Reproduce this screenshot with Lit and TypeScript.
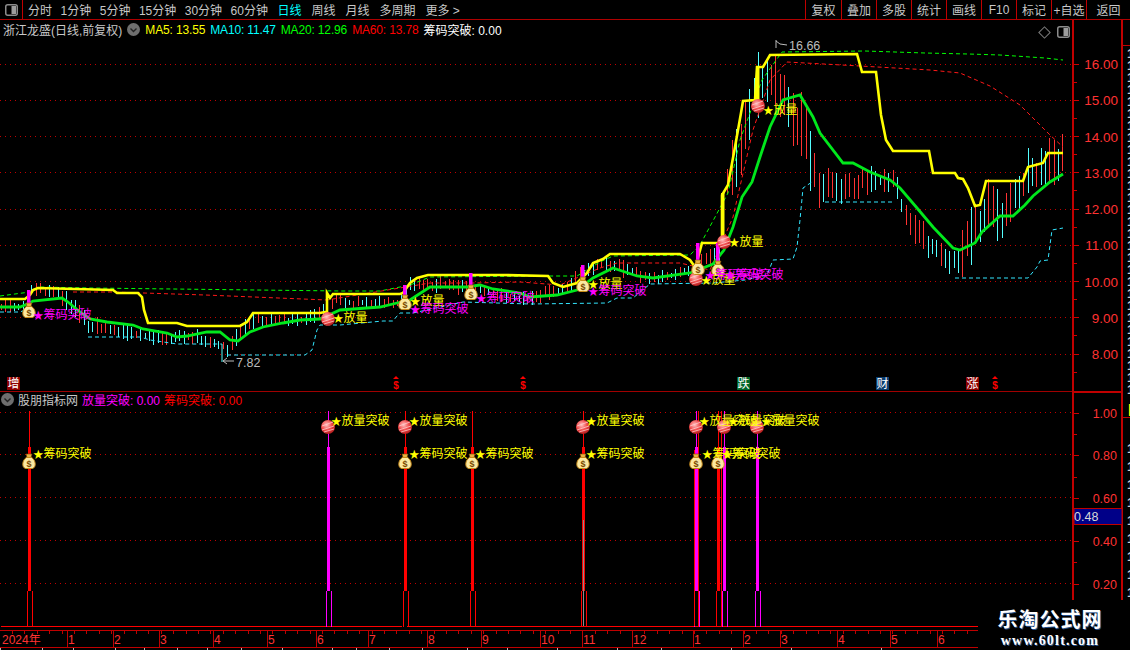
import { LitElement, html, css, svg } from 'lit';
import { customElement } from 'lit/decorators.js';

type Pt = [number, number];

const tabs = ['分时', '1分钟', '5分钟', '15分钟', '30分钟', '60分钟', '日线', '周线', '月线', '多周期', '更多 >'];
const buttons = ['复权', '叠加', '多股', '统计', '画线', 'F10', '标记', '+自选', '返回'];

// chart lines, page pixel coordinates read off the reference
const yellow: Pt[] = [[0,299],[25,299],[30,295],[33,290],[38,288],[113,290],[117,293],[138,293],[142,297],[144,310],[148,323],[177,323],[187,326],[240,326],[247,322],[253,313],[320,313],[325,312],[327,312],[327,293],[330,298],[333,294],[400,294],[403,293],[410,283],[417,278],[428,275],[502,275],[548,276],[553,283],[563,287],[577,283],[587,273],[593,263],[603,259],[610,254],[680,254],[690,260],[695,267],[698,258],[702,243],[722,243],[722,195],[728,185],[735,147],[741,113],[743,101],[755,100],[757,67],[763,67],[770,55],[857,54],[862,72],[876,72],[881,115],[886,140],[893,151],[929,151],[933,173],[955,173],[958,178],[963,179],[968,188],[975,206],[980,205],[986,181],[1023,181],[1028,167],[1043,163],[1048,153],[1063,153]];
const green: Pt[] = [[0,307],[20,307],[25,305],[33,301],[62,298],[68,302],[80,312],[90,319],[107,322],[133,325],[143,329],[167,333],[177,337],[187,336],[207,332],[220,332],[230,340],[238,341],[250,332],[263,327],[283,323],[300,320],[320,319],[340,310],[380,307],[397,303],[410,300],[430,287],[467,287],[480,285],[493,289],[520,293],[530,297],[557,295],[577,290],[593,278],[613,268],[637,276],[653,278],[690,273],[713,264],[724,250],[733,227],[742,197],[752,182],[760,157],[770,127],[783,100],[800,95],[813,117],[820,133],[843,163],[853,163],[870,172],[890,180],[900,188],[917,208],[933,227],[953,248],[960,250],[975,243],[982,232],[1000,216],[1013,216],[1025,205],[1033,196],[1050,182],[1063,174]];
const cyanSteps: Pt[][] = [
  [[0,312],[20,312],[30,308]],
  [[88,337],[140,337],[150,340],[177,344],[222,344]],
  [[227,355],[305,355],[312,350],[317,330],[320,325],[340,325],[383,321],[393,321],[397,316],[400,313],[413,313],[463,302],[530,304],[607,303],[617,298],[633,298],[650,284],[713,283],[745,280],[767,275],[773,260],[793,259],[797,247],[800,220],[803,188],[812,182]],
  [[825,202],[893,202]],
  [[955,278],[1028,278],[1037,267],[1040,261],[1048,260],[1052,230],[1063,228]],
];
const greenDash: Pt[] = [[0,296],[30,292],[38,287],[90,288],[340,291],[380,291],[410,285],[430,277],[548,276],[577,276],[600,262],[613,256],[690,255],[700,245],[728,193],[740,140],[750,113],[762,80],[782,52],[865,51],[925,53],[968,54],[1000,55],[1045,58],[1063,60]];
const redDash: Pt[] = [[73,292],[113,292],[205,295],[327,300],[430,283],[473,283],[520,282],[560,285],[600,268],[617,263],[680,263],[710,270],[733,217],[753,130],[770,80],[787,62],[860,66],[930,70],[960,73],[990,86],[1020,105],[1050,135],[1063,147]];

// candle cloud: x, middle y, half range
const cloud: [number, number, number][] = [[0,306,6],[25,306,6],[30,288,8],[60,296,8],[75,308,10],[88,325,10],[110,328,8],[140,335,8],[170,340,7],[190,335,8],[222,345,8],[228,350,9],[236,340,10],[250,320,8],[300,320,6],[325,312,8],[335,298,8],[350,303,6],[400,302,6],[410,285,8],[440,285,8],[480,290,8],[525,300,7],[560,290,8],[580,275,9],[600,262,10],[630,270,9],[650,280,7],[690,270,6],[700,260,10],[720,255,12],[725,190,25],[740,140,35],[757,85,40],[770,75,35],[785,95,40],[800,130,40],[812,160,35],[820,190,20],[870,180,14],[893,180,14],[905,215,16],[930,245,16],[955,265,12],[965,245,30],[985,215,35],[1005,215,28],[1025,180,28],[1045,165,24],[1063,155,22]];

const priceTicks = [16, 15, 14, 13, 12, 11, 10, 9, 8];
const indicatorTicks = [1, 0.8, 0.6, 0.4, 0.2];
const priceY = (p: number) => 64 + (16 - p) * 36.25;
const indicatorY = (v: number) => 412 + (1 - v) * 214;

const months: [string, number][] = [['2024年',1],['1',67],['2',113],['3',159],['4',213],['5',267],['6',316],['7',368],['8',427],['9',481],['10',540],['11',582],['12',632],['1',693],['2',743],['3',780],['4',837],['5',890],['6',937]];

const spikes = [
  { x: 29, color: '#ff0000', ball: false, bag: true },
  { x: 328, color: '#ff00ff', ball: true, bag: false },
  { x: 405, color: '#ff0000', ball: true, bag: true },
  { x: 472, color: '#ff0000', ball: false, bag: true },
  { x: 583, color: '#ff0000', ball: true, bag: true },
  { x: 696, color: '#ff00ff', ball: true, bag: true },
  { x: 718, color: '#ff0000', ball: false, bag: true },
  { x: 724, color: '#ff00ff', ball: true, bag: false },
  { x: 757, color: '#ff00ff', ball: true, bag: false },
];

const line = (p: Pt[]) => p.map((q) => q.join(',')).join(' ');

function candles() {
  let seed = 41;
  const rnd = () => {
    seed = (seed * 16807) % 2147483647;
    return seed / 2147483647;
  };
  const out = [];
  for (let x = 1; x < 1063; x += 4.35) {
    const i = cloud.findIndex((c) => c[0] > x);
    const a = cloud[Math.max(i - 1, 0)];
    const b = cloud[i < 0 ? cloud.length - 1 : i];
    const t = b[0] === a[0] ? 0 : (x - a[0]) / (b[0] - a[0]);
    const mid = a[1] + (b[1] - a[1]) * t;
    const amp = a[2] + (b[2] - a[2]) * t;
    const top = mid - amp * (0.3 + rnd() * 0.8);
    const bottom = mid + amp * (0.3 + rnd() * 0.8);
    const color = rnd() > 0.5 ? '#ff3232' : '#54ffff';
    const px = Math.round(x);
    out.push(svg`<line x1=${px} x2=${px} y1=${top} y2=${bottom} stroke=${color} />`);
  }
  return out;
}

function ball(x: number, y: number) {
  return svg`<g transform="translate(${x} ${y})">
    <circle r="7" fill="url(#ballFill)" />
    <path d="M-6 -1 L5 -5 M-6 3 L6 -1 M-4 5 L6 2" stroke="#ffd0d0" stroke-width="1" fill="none" opacity="0.75" />
  </g>`;
}

function bag(x: number, y: number) {
  return svg`<g transform="translate(${x} ${y})">
    <path d="M-3 -8 L3 -8 L2 -4.5 L-2 -4.5 Z" fill="#e8b040" stroke="#7a4a00" stroke-width="0.6" />
    <path d="M-2.5 -4.5 L2.5 -4.5 C7 -2 7.5 5.5 3.5 6.5 L-3.5 6.5 C-7.5 5.5 -7 -2 -2.5 -4.5 Z" fill="#fbe8a0" stroke="#c88a18" stroke-width="1" />
    <text class="bag-sign" y="4.5">$</text>
  </g>`;
}

function marker(x: number, y: number, text: string, color: string) {
  return svg`<text class="signal" x=${x} y=${y} fill=${color}><tspan class="star">★</tspan>${text}</text>`;
}

function flagMark(x: number) {
  return svg`<path d="M${x - 3} 379 L${x} 376 L${x + 3} 379 Z" fill="#ff0000" /><text class="dollar" x=${x} y="388.5">$</text>`;
}

const dollarBars: [number, number, number][] = [[29, 290, 306], [405, 285, 296], [471, 273, 286], [583, 265, 278], [698, 243, 262], [718, 243, 263]];

function mainChart() {
  return html`<svg class="plot" width="1072" height="371" viewBox="0 20 1072 371">
    <defs>
      <radialGradient id="ballFill" cx="0.4" cy="0.35" r="0.7">
        <stop offset="0" stop-color="#ffc0c0" />
        <stop offset="0.55" stop-color="#f04848" />
        <stop offset="1" stop-color="#a81818" />
      </radialGradient>
    </defs>
    ${priceTicks.map((p) => svg`<line class="grid" x1="0" x2="1072" y1=${priceY(p)} y2=${priceY(p)} />`)}
    <g class="crisp">${candles()}</g>
    <polyline class="dash" stroke="#00ff00" stroke-width="1" points=${line(greenDash)} />
    <polyline class="dash" stroke="#ff1818" stroke-width="1" points=${line(redDash)} />
    ${cyanSteps.map((s) => svg`<polyline class="dash" stroke="#33e6ff" stroke-width="1" points=${line(s)} />`)}
    <polyline class="curve" stroke="#ffff00" stroke-width="2.6" points=${line(yellow)} />
    <polyline class="curve" stroke="#00e81c" stroke-width="2.8" points=${line(green)} />
    <rect x="721" y="193" width="3.5" height="50" fill="#ffff00" />
    <rect x="756" y="67" width="3.5" height="34" fill="#ffff00" />

    <path class="note" d="M776 40 L776 48 M776 41 L780 44 L787 45" />
    <text class="note-text" x="789" y="50">16.66</text>
    <line x1="222" x2="222" y1="344" y2="362" stroke="#54ffff" />
    <path class="note" d="M223 361 L234 361 M223 361 L227 358 M223 361 L227 364" />
    <text class="note-text" x="236" y="367">7.82</text>

    ${dollarBars.map((b) => svg`<rect x=${b[0] - 2} y=${b[1]} width="3.5" height=${b[2] - b[1]} fill="#ff00ff" />`)}
    ${ball(328, 319)}${ball(696, 279)}${ball(724, 242)}${ball(758, 106)}
    ${bag(29, 311)}${bag(405, 303)}${bag(471, 293)}${bag(583, 285)}${bag(698, 268)}${bag(718, 269)}

    ${marker(333, 322, '放量', '#ffff00')}
    ${marker(410, 305, '放量', '#ffff00')}
    ${marker(588, 288, '放量', '#ffff00')}
    ${marker(701, 284, '放量', '#ffff00')}
    ${marker(729, 246, '放量', '#ffff00')}
    ${marker(763, 114, '放量', '#ffff00')}
    ${marker(33, 319, '筹码突破', '#ff00ff')}
    ${marker(410, 313, '筹码突破', '#ff00ff')}
    ${marker(476, 302, '筹码突破', '#ff00ff')}
    ${marker(588, 295, '筹码突破', '#ff00ff')}
    ${marker(705, 279, '筹码突破', '#ff00ff')}
    ${marker(725, 279, '筹码突破', '#ff00ff')}

    <rect x="7" y="377" width="13" height="13" fill="#8c0000" /><text class="tag" x="13.5" y="388">增</text>
    <rect x="737" y="377" width="13" height="13" fill="#006428" /><text class="tag" x="743.5" y="388">跌</text>
    <rect x="876" y="377" width="13" height="13" fill="#0a3c6e" /><text class="tag" x="882.5" y="388">财</text>
    <rect x="966" y="377" width="13" height="13" fill="#8c0000" /><text class="tag" x="972.5" y="388">涨</text>
    ${flagMark(396)}${flagMark(523)}${flagMark(995)}
  </svg>`;
}

function subChart() {
  return html`<svg class="plot" width="1072" height="238" viewBox="0 392 1072 238">
    ${indicatorTicks.map((v) => svg`<line class="grid" x1="0" x2="1072" y1=${indicatorY(v)} y2=${indicatorY(v)} />`)}
    <rect x="1" y="626" width="401" height="1" fill="#ff0000" />
    <rect x="407" y="626" width="665" height="1" fill="#ff0000" />
    ${spikes.map((s) => svg`<g fill=${s.color}>
      <rect x=${s.x} y="411" width="1" height="36" />
      <rect x=${s.x - 1} y="447" width="3" height="144" />
      <rect x=${s.x - 2} y="591" width="1" height="36" />
      <rect x=${s.x + 3} y="591" width="1" height="36" />
    </g>`)}
    <path class="crisp" d="M698.5 411 V626 M721.5 411 V626 M694.5 450 V626" stroke="#ff0000" fill="none" />
    <rect x="583" y="520" width="1" height="106" fill="#8c8c8c" />
    ${spikes.filter((s) => s.ball).map((s) => ball(s.x, 427))}
    ${spikes.filter((s) => s.bag).map((s) => bag(s.x, 462))}
    ${marker(33, 458, '筹码突破', '#ffff00')}
    ${marker(331, 425, '放量突破', '#ffff00')}
    ${marker(409, 425, '放量突破', '#ffff00')}
    ${marker(409, 458, '筹码突破', '#ffff00')}
    ${marker(475, 458, '筹码突破', '#ffff00')}
    ${marker(586, 425, '放量突破', '#ffff00')}
    ${marker(586, 458, '筹码突破', '#ffff00')}
    ${marker(699, 425, '放量突破', '#ffff00')}
    ${marker(702, 458, '筹码突破', '#ffff00')}
    ${marker(722, 458, '筹码突破', '#ffff00')}
    ${marker(728, 425, '放量突破', '#ffff00')}
    ${marker(761, 425, '放量突破', '#ffff00')}
  </svg>`;
}

function dateAxis() {
  const ticks = [];
  for (let x = 12; x < 978; x += 12.4) ticks.push(svg`<line x1=${Math.round(x)} x2=${Math.round(x)} y1="0" y2="3" />`);
  return html`<svg class="dates" width="1072" height="16" viewBox="0 0 1072 16">
    <g class="crisp" stroke="#c00000">${ticks}</g>
    ${months.map((m, i) => svg`
      ${i > 0 ? svg`<line class="crisp" x1=${m[1]} x2=${m[1]} y1="0" y2="16" stroke="#c00000" />` : ''}
      <text class="date" x=${m[1] + 1} y="13">${m[0]}</text>`)}
  </svg>`;
}

function priceAxis() {
  const minor = priceTicks.map((p) => p - 0.5);
  return html`<svg width="49" height="371" viewBox="1074 20 49 371">
    <g class="crisp" stroke="#d00000">
      ${priceTicks.map((p) => svg`<line x1="1074" x2="1079" y1=${priceY(p)} y2=${priceY(p)} />`)}
      ${minor.map((p) => svg`<line x1="1074" x2="1077" y1=${priceY(p)} y2=${priceY(p)} />`)}
    </g>
    ${priceTicks.map((p) => svg`<text class="price" x="1118" y=${priceY(p) + 5}>${p.toFixed(2)}</text>`)}
  </svg>`;
}

function indicatorAxis() {
  const minor = [0.9, 0.7, 0.5, 0.3];
  return html`<svg width="49" height="208" viewBox="1074 392 49 208">
    <g class="crisp" stroke="#d00000">
      ${indicatorTicks.map((v) => svg`<line x1="1074" x2="1079" y1=${indicatorY(v)} y2=${indicatorY(v)} />`)}
      ${minor.map((v) => svg`<line x1="1074" x2="1077" y1=${indicatorY(v)} y2=${indicatorY(v)} />`)}
    </g>
    ${indicatorTicks.map((v) => svg`<text class="level" x="1117" y=${indicatorY(v) + 4.5}>${v.toFixed(2)}</text>`)}
    <rect x="1074" y="507.5" width="48" height="16" fill="#000088" stroke="#c00000" />
    <text class="cursor" x="1074" y="520">0.48</text>
  </svg>`;
}

const chevron = html`<svg class="chevron" width="13" height="13" viewBox="0 0 13 13">
  <circle cx="6.5" cy="6.5" r="6.5" fill="#6e6e6e" />
  <path d="M3.5 5.5 L6.5 8.5 L9.5 5.5" fill="none" stroke="#222" stroke-width="1.4" />
</svg>`;

const panelIcon = (cls: string) => html`<svg class=${cls} width="13" height="12" viewBox="0 0 13 12">
  <rect x="0.75" y="0.75" width="11.5" height="10.5" rx="2" fill="none" stroke="#8c8c8c" stroke-width="1.5" />
  <rect x="6.5" y="2" width="4.5" height="8" fill="#9c9c9c" />
</svg>`;

const upperRows = Array.from({ length: 29 }, (_, i) => (13.8 - i * 0.03).toFixed(2));
const lowerRows = ['12.41', '12.38', '12.35', '12.33', '12.30', '12.28', '12.25', '12.22', '12.20', '12.18'];
const statusCells = [42, 31, 42, 29, 33, 30, 34, 41, 50, 24, 33, 33, 45, 40, 50, 60, 44, 70, 60, 90, 120];

@customElement('app-root')
export class AppRoot extends LitElement {
  static styles = css`
    :host {
      display: block;
      position: relative;
      width: 1130px;
      height: 650px;
      overflow: hidden;
      background: #000;
      color: #c8c8c8;
      font: 12px 'Liberation Sans', 'Noto Sans CJK SC', sans-serif;
    }
    svg { display: block; }
    .toolbar {
      display: flex;
      align-items: center;
      height: 20px;
      box-sizing: border-box;
      border-bottom: 1px solid #b00000;
    }
    .home {
      display: flex;
      align-items: center;
      justify-content: center;
      flex: none;
      width: 23px;
      height: 100%;
      border-right: 1px solid #c00000;
      box-sizing: border-box;
    }
    .tabs { display: flex; gap: 8.5px; padding-left: 5px; white-space: nowrap; }
    .tab-active { color: #00ffff; margin-left: 1px; }
    .tab-active ~ span { margin-left: 1.5px; }
    .buttons { display: flex; height: 100%; margin-left: auto; }
    .button {
      display: flex;
      align-items: center;
      justify-content: center;
      width: 34px;
      border-left: 1px solid #c00000;
      white-space: nowrap;
    }
    .button:first-child { width: 35px; }
    .button:last-child { width: 43px; }
    .workspace { display: flex; height: 630px; }
    .charts { flex: none; width: 1072px; }
    .pane { position: relative; }
    .pane-main { height: 371px; border-bottom: 1px solid #a00000; }
    .pane-sub { height: 238px; }
    .legend {
      position: absolute;
      top: 1px;
      left: 3px;
      display: flex;
      align-items: center;
      gap: 5px;
      white-space: nowrap;
    }
    .legend-sub { left: 1px; top: -1px; gap: 4px; }
    .chevron { flex: none; }
    .plot-tools {
      position: absolute;
      top: 6px;
      right: 2px;
      display: flex;
      align-items: center;
      gap: 5px;
    }
    .diamond { width: 7px; height: 7px; border: 1px solid #7c7c7c; transform: rotate(45deg); margin-right: 3px; }
    .yellow, .cyan, .green, .ma-red { letter-spacing: -0.15px; }
    .yellow { color: #ffff00; }
    .cyan { color: #00ffff; }
    .green { color: #00ff00; }
    .red, .ma-red { color: #ff0000; }
    .white { color: #ffffff; }
    .magenta { color: #ff00ff; }
    .dates { border-top: 1px solid #c00000; border-bottom: 1px solid #c00000; }
    .status { display: flex; height: 4px; overflow: hidden; }
    .status span { flex: none; border-left: 1px solid #b8b8b8; box-sizing: border-box; }
    .axes {
      flex: none;
      width: 51px;
      height: 580px;
      border-left: 2px solid #c00000;
      border-right: 2px solid #c00000;
      box-sizing: border-box;
    }
    .axis-main { height: 371px; border-bottom: 2px solid #c00000; }
    .side {
      flex: 1;
      height: 630px;
      overflow: hidden;
      display: flex;
      flex-direction: column;
      white-space: nowrap;
      color: #d0d0d0;
      font-size: 13px;
      font-weight: 700;
    }
    .side-head { height: 25px; flex: none; border-bottom: 1px solid #c00000; }
    .side-upper {
      height: 354px;
      flex: none;
      padding: 2px 0 0 4px;
      overflow: hidden;
      line-height: 12px;
    }
    .side-mark { flex: none; height: 15px; padding-left: 4px; line-height: 15px; color: #ffff00; }
    .side-lower {
      flex: none;
      border-top: 1px solid #c00000;
      padding: 22px 0 0 4px;
      line-height: 18px;
    }
    .watermark {
      position: absolute;
      left: 978px;
      top: 600px;
      width: 152px;
      height: 50px;
      background: #000;
      display: flex;
      flex-direction: column;
      align-items: center;
      padding: 7px 8px 0 0;
      box-sizing: border-box;
      color: #fff;
      text-shadow: 1px 1px 0 #24508c;
    }
    .wm-title { font: 700 20px/24px 'Noto Sans CJK SC', sans-serif; letter-spacing: 1px; }
    .wm-url { font: 700 14px/16px 'Liberation Serif', serif; letter-spacing: 1.2px; margin-top: 2px; }

    .crisp line, line.crisp, path.crisp, .crisp path { shape-rendering: crispEdges; }
    .grid { stroke: #c00000; stroke-width: 1; stroke-dasharray: 1 4; shape-rendering: crispEdges; }
    .curve { fill: none; stroke-linejoin: miter; }
    .dash { fill: none; stroke-dasharray: 4 3; }
    .note { fill: none; stroke: #bcbcbc; stroke-width: 1; }
    .note-text { fill: #bcbcbc; font-size: 12.5px; }
    .signal { font-size: 12px; }
    .star { font-size: 10.5px; }
    .tag { fill: #fff; font-size: 12px; text-anchor: middle; }
    .dollar { fill: #ff0000; font-size: 10px; font-weight: 700; text-anchor: middle; }
    .bag-sign { fill: #7a4a00; font-size: 9px; font-weight: 700; text-anchor: middle; }
    .date { fill: #ff3232; font-size: 12px; }
    .price { fill: #ff3232; font-size: 13.5px; text-anchor: end; }
    .level { fill: #ff3232; font-size: 12.5px; text-anchor: end; }
    .cursor { fill: #d8d8d8; font-size: 12.5px; }
  `;

  render() {
    return html`
      <div class="toolbar">
        <div class="home">${panelIcon('home-icon')}</div>
        <div class="tabs">
          ${tabs.map((t) => html`<span class=${t === '日线' ? 'tab-active' : ''}>${t}</span>`)}
        </div>
        <div class="buttons">
          ${buttons.map((b) => html`<div class="button">${b}</div>`)}
        </div>
      </div>
      <div class="workspace">
        <div class="charts">
          <section class="pane pane-main">
            ${mainChart()}
            <div class="legend">
              <span>浙江龙盛(日线,前复权)</span>
              ${chevron}
              <span class="yellow">MA5: 13.55</span>
              <span class="cyan">MA10: 11.47</span>
              <span class="green">MA20: 12.96</span>
              <span class="ma-red">MA60: 13.78</span>
              <span class="white">筹码突破: 0.00</span>
            </div>
            <div class="plot-tools"><div class="diamond"></div>${panelIcon('plot-icon')}</div>
          </section>
          <section class="pane pane-sub">
            ${subChart()}
            <div class="legend legend-sub">
              ${chevron}
              <span>股朋指标网</span>
              <span class="magenta">放量突破: 0.00</span>
              <span class="red">筹码突破: 0.00</span>
            </div>
          </section>
          ${dateAxis()}
          <div class="status">
            ${statusCells.map((w) => html`<span style="width:${w}px"></span>`)}
          </div>
        </div>
        <div class="axes">
          <div class="axis-main">${priceAxis()}</div>
          ${indicatorAxis()}
        </div>
        <div class="side">
          <div class="side-head"></div>
          <div class="side-upper">${upperRows.map((r) => html`<div>${r}</div>`)}</div>
          <div class="side-mark">日</div>
          <div class="side-lower">${lowerRows.map((r) => html`<div>${r}</div>`)}</div>
        </div>
      </div>
      <div class="watermark">
        <div class="wm-title">乐淘公式网</div>
        <div class="wm-url">www.60lt.com</div>
      </div>
    `;
  }
}
